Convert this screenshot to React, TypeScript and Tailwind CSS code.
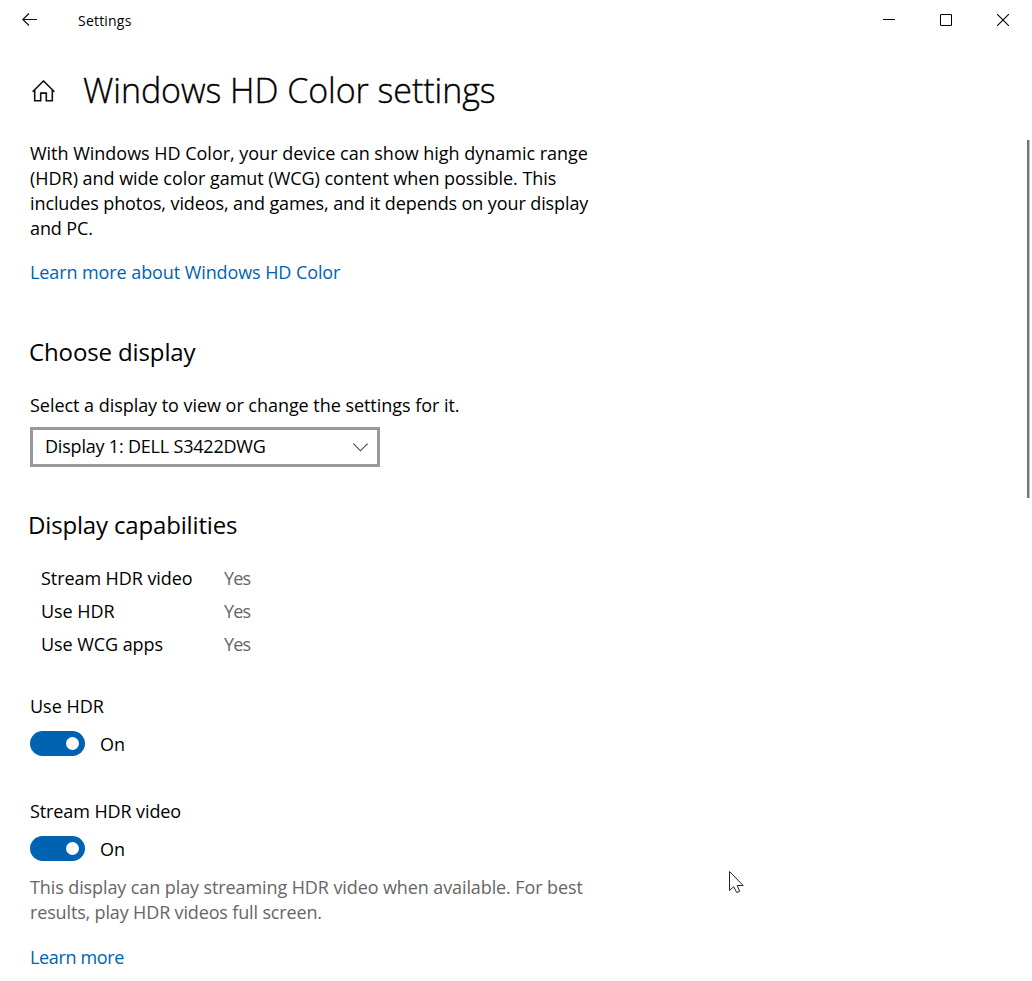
import { useState } from "react";

const capabilities = ["Stream HDR video", "Use HDR", "Use WCG apps"];

function Toggle({ label }: { label: string }) {
  const [on, setOn] = useState(true);
  return (
    <div>
      <div className="h-[25px]">{label}</div>
      <div className="mt-3 flex h-[25px] items-center gap-[15px]">
        <button
          role="switch"
          aria-checked={on}
          aria-label={label}
          onClick={() => setOn(!on)}
          className={`flex h-[25px] w-[55px] items-center rounded-full px-[6px] ${on ? "justify-end bg-[#0063b1]" : "justify-start bg-[#767676]"}`}
        >
          <span className="h-[13px] w-[13px] rounded-full bg-white" />
        </button>
        <span className="pt-0.5 tracking-normal">{on ? "On" : "Off"}</span>
      </div>
    </div>
  );
}

export default function App() {
  return (
    <div className="relative flex h-[981px] w-[1032px] flex-col overflow-hidden bg-white font-['Open_Sans',sans-serif] text-[18px] leading-[25px] whitespace-nowrap text-black">
      <header className="flex h-10 shrink-0 items-center pl-[22px]">
        <svg className="h-[14px] w-[16px]" viewBox="0 0 16 14" fill="none" stroke="#111" strokeWidth="1.2">
          <path d="M15 6.5H.8M7 .5l-6.2 6 6.2 6" />
        </svg>
        <span className="ml-10 pt-0.5 text-[14px] leading-5 tracking-[0.2px]">Settings</span>
        <div className="ml-auto flex items-center gap-[45px] pr-[23px]">
          <svg className="h-[12px] w-[12px]" viewBox="0 0 12 12" stroke="#000"><path d="M0 5.5H12" /></svg>
          <svg className="h-[12px] w-[12px]" viewBox="0 0 12 12" fill="none" stroke="#000"><path d="M.5.5h11v11H.5z" /></svg>
          <svg className="h-[12px] w-[12px]" viewBox="0 0 12 12" stroke="#000" strokeWidth="1.1"><path d="M0 0l12 12M12 0L0 12" /></svg>
        </div>
      </header>
      <div className="flex h-[101px] shrink-0 items-center pl-8">
        <svg className="h-[22px] w-[23px]" viewBox="0 0 23 22" fill="none" stroke="#111" strokeWidth="1.6">
          <path d="M.6 11.7L11.5 1l10.9 10.7M2.7 10v10.8h6v-7.7h5.6v7.7h6V10" />
        </svg>
        <h1 className="ml-7 pb-[2px] text-[34px] leading-[48px] font-light tracking-[-0.06px] [-webkit-text-stroke:0.35px_black]">Windows HD Color settings</h1>
      </div>
      <main className="flex flex-col items-start pl-[30px]">
        <p className="h-[100px]">
          <span className="block tracking-[-0.02px]">With Windows HD Color, your device can show high dynamic range</span>
          <span className="block tracking-[-0.03px]">(HDR) and wide color gamut (WCG) content when possible. This</span>
          <span className="block tracking-[-0.1px]">includes photos, videos, and games, and it depends on your display</span>
          <span className="block tracking-[-0.1px]">and PC.</span>
        </p>
        <a href="#about" className="mt-[19px] tracking-[-0.09px] text-[#0063b1]">Learn more about Windows HD Color</a>
        <h2 className="mt-[51px] -ml-px text-[24px] leading-8 tracking-[-0.12px]">Choose display</h2>
        <p className="mt-[25px] tracking-[-0.04px]">Select a display to view or change the settings for it.</p>
        <button className="mt-[9px] flex h-10 w-[350px] items-center justify-between border-3 border-[#999] pr-[9px] pl-3">
          <span className="pb-0.5 tracking-[-0.2px]">Display 1: DELL S3422DWG</span>
          <svg className="h-[9px] w-[15px]" viewBox="0 0 15 9" fill="none" stroke="#444" strokeWidth="1.1">
            <path d="M.4.6l7.1 7.2L14.6.6" />
          </svg>
        </button>
        <h2 className="mt-[42px] -ml-0.5 text-[24px] leading-8 tracking-[-0.16px]">Display capabilities</h2>
        <dl className="mt-[25px] ml-[11px] grid grid-cols-[183px_auto] gap-y-2">
          {capabilities.map((name) => (
            <div key={name} className="contents">
              <dt className="tracking-[-0.07px]">{name}</dt>
              <dd className="tracking-[-0.8px] text-[#666]">Yes</dd>
            </div>
          ))}
        </dl>
        <div className="mt-[37px]"><Toggle label="Use HDR" /></div>
        <div className="mt-[43px] tracking-[-0.1px]"><Toggle label="Stream HDR video" /></div>
        <p className="mt-[14px] text-[#666]">
          <span className="block tracking-[-0.1px]">This display can play streaming HDR video when available. For best</span>
          <span className="block tracking-[-0.15px]">results, play HDR videos full screen.</span>
        </p>
        <a href="#learn" className="mt-5 tracking-[-0.35px] text-[#0063b1]">Learn more</a>
      </main>
      <div className="absolute top-[140px] right-[3px] h-[358px] w-[2px] bg-[#767676]" />
      <div className="absolute top-[140px] right-[2px] h-[358px] w-px bg-[#c2c2c2]" />
      <svg className="absolute top-[870px] left-[728px] h-6 w-[17px]" viewBox="0 0 17 24" fill="#fff" stroke="#223" strokeWidth="1">
        <path d="M1.5 1.5v19l4.2-3.8 3 5.8 3-1.2-2.5-5.8h6z" />
      </svg>
    </div>
  );
}
